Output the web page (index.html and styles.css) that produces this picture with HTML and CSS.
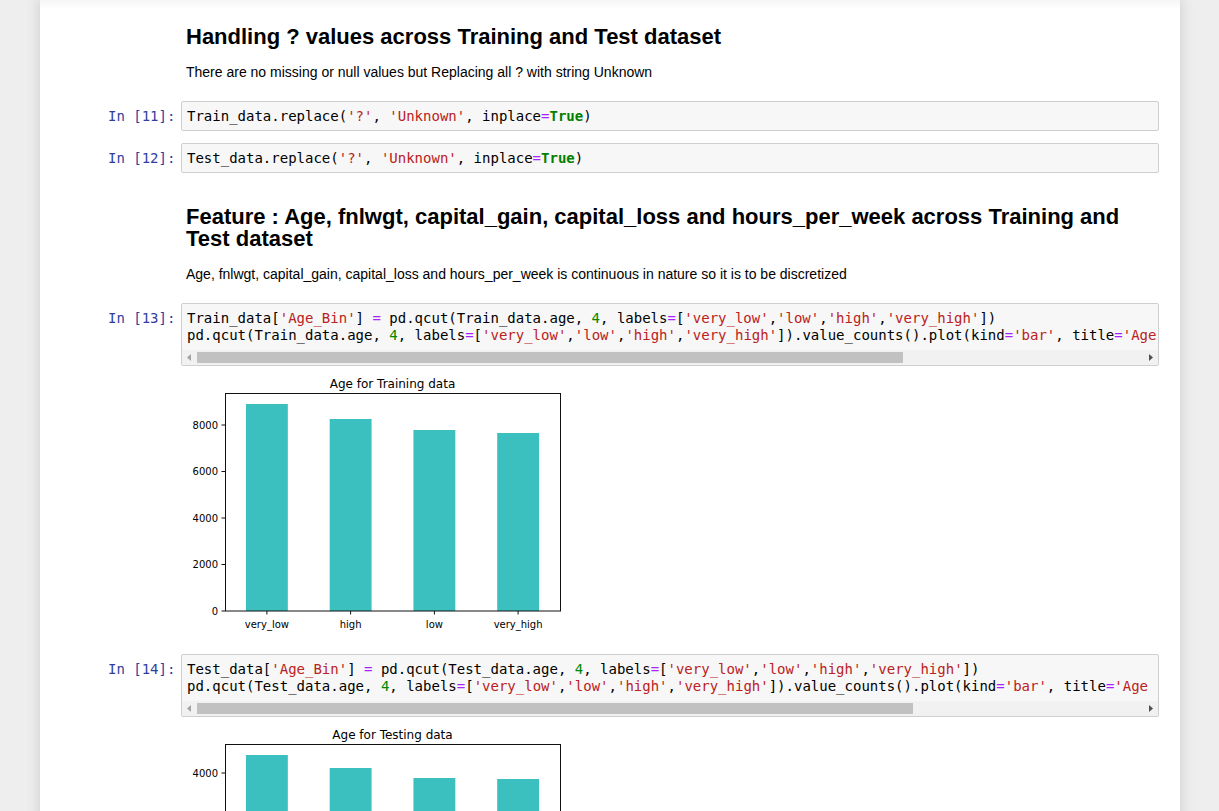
FILE: index.html
```html
<!DOCTYPE html>
<html lang="en">
<head>
<meta charset="utf-8">
<title>Notebook</title>
<link rel="stylesheet" href="styles.css">
</head>
<body>
<div class="notebook">

  <div class="cell md first">
    <div class="prompt"></div>
    <div class="md-body">
      <h2>Handling ? values across Training and Test dataset</h2>
      <p>There are no missing or null values but Replacing all ? with string Unknown</p>
    </div>
  </div>

  <div class="cell code-cell">
    <div class="cell-main">
      <div class="prompt">In&nbsp;[11]:</div>
      <div class="input">
        <pre class="code">Train_data.replace(<span class="s">'?'</span>, <span class="s">'Unknown'</span>, inplace<span class="o">=</span><span class="k">True</span>)</pre>
      </div>
    </div>
  </div>

  <div class="cell code-cell">
    <div class="cell-main">
      <div class="prompt">In&nbsp;[12]:</div>
      <div class="input">
        <pre class="code">Test_data.replace(<span class="s">'?'</span>, <span class="s">'Unknown'</span>, inplace<span class="o">=</span><span class="k">True</span>)</pre>
      </div>
    </div>
  </div>

  <div class="cell md">
    <div class="prompt"></div>
    <div class="md-body">
      <h2>Feature : Age, fnlwgt, capital_gain, capital_loss and hours_per_week across Training and Test dataset</h2>
      <p>Age, fnlwgt, capital_gain, capital_loss and hours_per_week is continuous in nature so it is to be discretized</p>
    </div>
  </div>

  <div class="cell code-cell">
    <div class="cell-main">
      <div class="prompt">In&nbsp;[13]:</div>
      <div class="input">
        <pre class="code scrolled">Train_data[<span class="s">'Age_Bin'</span>] <span class="o">=</span> pd.qcut(Train_data.age, <span class="n">4</span>, labels<span class="o">=</span>[<span class="s">'very_low'</span>,<span class="s">'low'</span>,<span class="s">'high'</span>,<span class="s">'very_high'</span>])
pd.qcut(Train_data.age, <span class="n">4</span>, labels<span class="o">=</span>[<span class="s">'very_low'</span>,<span class="s">'low'</span>,<span class="s">'high'</span>,<span class="s">'very_high'</span>]).value_counts().plot(kind<span class="o">=</span><span class="s">'bar'</span>, title<span class="o">=</span><span class="s">'Age</span></pre>
        <div class="hscroll">
          <div class="sb-btn"><svg width="15" height="15" viewBox="0 0 15 15"><path d="M5 7.5 L9 4 L9 11 Z" fill="#a3a3a3"/></svg></div>
          <div class="sb-track"><div class="sb-thumb thumb-a"></div></div>
          <div class="sb-btn"><svg width="15" height="15" viewBox="0 0 15 15"><path d="M10 7.5 L6 4 L6 11 Z" fill="#505050"/></svg></div>
        </div>
      </div>
    </div>
    <div class="output">
      <div class="prompt"></div>
      <svg class="chart" width="400" height="276" viewBox="0 0 400 276">
        <text x="211.5" y="21.5" class="ct">Age for Training data</text>
        <g fill="#3bbfbf">
          <rect x="64.94" y="38" width="41.88" height="207"/>
          <rect x="148.69" y="53" width="41.88" height="192"/>
          <rect x="232.44" y="64" width="41.88" height="181"/>
          <rect x="316.19" y="67" width="41.88" height="178"/>
        </g>
        <rect x="44.5" y="27.5" width="335" height="217.5" fill="none" stroke="#111" stroke-width="1"/>
        <g stroke="#111" stroke-width="1">
          <line x1="40.5" y1="245" x2="44" y2="245"/>
          <line x1="40.5" y1="198.5" x2="44" y2="198.5"/>
          <line x1="40.5" y1="152" x2="44" y2="152"/>
          <line x1="40.5" y1="105.5" x2="44" y2="105.5"/>
          <line x1="40.5" y1="59" x2="44" y2="59"/>
          <line x1="85.9" y1="245" x2="85.9" y2="248.5"/>
          <line x1="169.6" y1="245" x2="169.6" y2="248.5"/>
          <line x1="253.4" y1="245" x2="253.4" y2="248.5"/>
          <line x1="337.1" y1="245" x2="337.1" y2="248.5"/>
        </g>
        <g class="yt">
          <text x="37" y="248.6">0</text>
          <text x="37" y="202.1">2000</text>
          <text x="37" y="155.6">4000</text>
          <text x="37" y="109.1">6000</text>
          <text x="37" y="62.6">8000</text>
        </g>
        <g class="xt">
          <text x="85.9" y="261.5">very_low</text>
          <text x="169.6" y="261.5">high</text>
          <text x="253.4" y="261.5">low</text>
          <text x="337.1" y="261.5">very_high</text>
        </g>
      </svg>
    </div>
  </div>

  <div class="cell code-cell">
    <div class="cell-main">
      <div class="prompt">In&nbsp;[14]:</div>
      <div class="input">
        <pre class="code scrolled">Test_data[<span class="s">'Age_Bin'</span>] <span class="o">=</span> pd.qcut(Test_data.age, <span class="n">4</span>, labels<span class="o">=</span>[<span class="s">'very_low'</span>,<span class="s">'low'</span>,<span class="s">'high'</span>,<span class="s">'very_high'</span>])
pd.qcut(Test_data.age, <span class="n">4</span>, labels<span class="o">=</span>[<span class="s">'very_low'</span>,<span class="s">'low'</span>,<span class="s">'high'</span>,<span class="s">'very_high'</span>]).value_counts().plot(kind<span class="o">=</span><span class="s">'bar'</span>, title<span class="o">=</span><span class="s">'Age</span></pre>
        <div class="hscroll">
          <div class="sb-btn"><svg width="15" height="15" viewBox="0 0 15 15"><path d="M5 7.5 L9 4 L9 11 Z" fill="#a3a3a3"/></svg></div>
          <div class="sb-track"><div class="sb-thumb thumb-b"></div></div>
          <div class="sb-btn"><svg width="15" height="15" viewBox="0 0 15 15"><path d="M10 7.5 L6 4 L6 11 Z" fill="#505050"/></svg></div>
        </div>
      </div>
    </div>
    <div class="output">
      <div class="prompt"></div>
      <svg class="chart" width="400" height="276" viewBox="0 0 400 276">
        <text x="211.5" y="21.5" class="ct">Age for Testing data</text>
        <g fill="#3bbfbf">
          <rect x="64.94" y="38" width="41.88" height="207"/>
          <rect x="148.69" y="51" width="41.88" height="194"/>
          <rect x="232.44" y="61" width="41.88" height="184"/>
          <rect x="316.19" y="62" width="41.88" height="183"/>
        </g>
        <rect x="44.5" y="27.5" width="335" height="217.5" fill="none" stroke="#111" stroke-width="1"/>
        <g stroke="#111" stroke-width="1">
          <line x1="40.5" y1="245" x2="44" y2="245"/>
          <line x1="40.5" y1="197.75" x2="44" y2="197.75"/>
          <line x1="40.5" y1="150.5" x2="44" y2="150.5"/>
          <line x1="40.5" y1="103.25" x2="44" y2="103.25"/>
          <line x1="40.5" y1="56" x2="44" y2="56"/>
          <line x1="85.9" y1="245" x2="85.9" y2="248.5"/>
          <line x1="169.6" y1="245" x2="169.6" y2="248.5"/>
          <line x1="253.4" y1="245" x2="253.4" y2="248.5"/>
          <line x1="337.1" y1="245" x2="337.1" y2="248.5"/>
        </g>
        <g class="yt">
          <text x="37" y="248.6">0</text>
          <text x="37" y="201.35">1000</text>
          <text x="37" y="154.1">2000</text>
          <text x="37" y="106.85">3000</text>
          <text x="37" y="59.6">4000</text>
        </g>
        <g class="xt">
          <text x="85.9" y="261.5">very_low</text>
          <text x="169.6" y="261.5">high</text>
          <text x="253.4" y="261.5">low</text>
          <text x="337.1" y="261.5">very_high</text>
        </g>
      </svg>
    </div>
  </div>

</div>
</body>
</html>
```
FILE: styles.css
```css
html {
  overflow: hidden;
}

body {
  margin: 0;
  background: #eeeeee;
  font-family: "Liberation Sans", Arial, sans-serif;
  color: #000;
}

.notebook {
  position: relative;
  width: 1140px;
  margin-left: 40px;
  min-height: 811px;
  box-sizing: border-box;
  padding: 0 15px;
  background: #fff;
  box-shadow: 0 0 12px 1px rgba(87, 87, 87, 0.2);
}

.notebook::before {
  content: "";
  position: absolute;
  top: 0;
  left: 0;
  right: 0;
  height: 10px;
  background: linear-gradient(rgba(0, 0, 0, 0.045), rgba(0, 0, 0, 0));
}

.cell {
  border: 1px solid transparent;
  padding: 5px;
  display: flex;
}

.cell.first {
  margin-top: -1px;
}

.code-cell {
  flex-direction: column;
}

.cell-main,
.output {
  display: flex;
}

.prompt {
  flex: none;
  width: 120px;
  box-sizing: border-box;
  padding: 7px 5.6px 0 0;
  text-align: right;
  font: 14px/17px "DejaVu Sans Mono", monospace;
  color: #303f9f;
  white-space: nowrap;
}

.input {
  flex: 1;
  min-width: 0;
  border: 1px solid #cfcfcf;
  border-radius: 2px;
  background: #f7f7f7;
  overflow: hidden;
}

.code {
  margin: 0;
  padding: 6px 4px 5px 5px;
  font: 14px/17px "DejaVu Sans Mono", monospace;
  color: #000;
  white-space: pre;
  overflow: hidden;
}

.code.scrolled {
  padding-bottom: 6px;
}

.s { color: #ba2121; }
.o { color: #aa22ff; }
.n { color: #008800; }
.k { color: #008000; font-weight: bold; }

.hscroll {
  display: flex;
  height: 15px;
  background: #f1f1f1;
}

.sb-btn {
  flex: none;
  width: 15px;
  height: 15px;
}

.sb-btn svg {
  display: block;
}

.sb-track {
  flex: 1;
  display: flex;
  align-items: center;
}

.sb-thumb {
  height: 11px;
  background: #c1c1c1;
}

.thumb-a { width: 706px; }
.thumb-b { width: 716px; }

/* markdown */
.md-body {
  flex: 1;
  min-width: 0;
  padding: 0 5.6px 7px 5px;
}

.md-body h2 {
  margin: 21px 0 14px;
  font-size: 22px;
  line-height: 22px;
  font-weight: bold;
}

.md-body p {
  margin: 0;
  font-size: 14px;
  line-height: 20px;
}

/* charts */
.chart {
  display: block;
  font-family: "DejaVu Sans", sans-serif;
}

.ct {
  font-size: 12px;
  text-anchor: middle;
  fill: #000;
}

.yt text {
  font-size: 10px;
  text-anchor: end;
  fill: #000;
}

.xt text {
  font-size: 10px;
  text-anchor: middle;
  fill: #000;
}
```
